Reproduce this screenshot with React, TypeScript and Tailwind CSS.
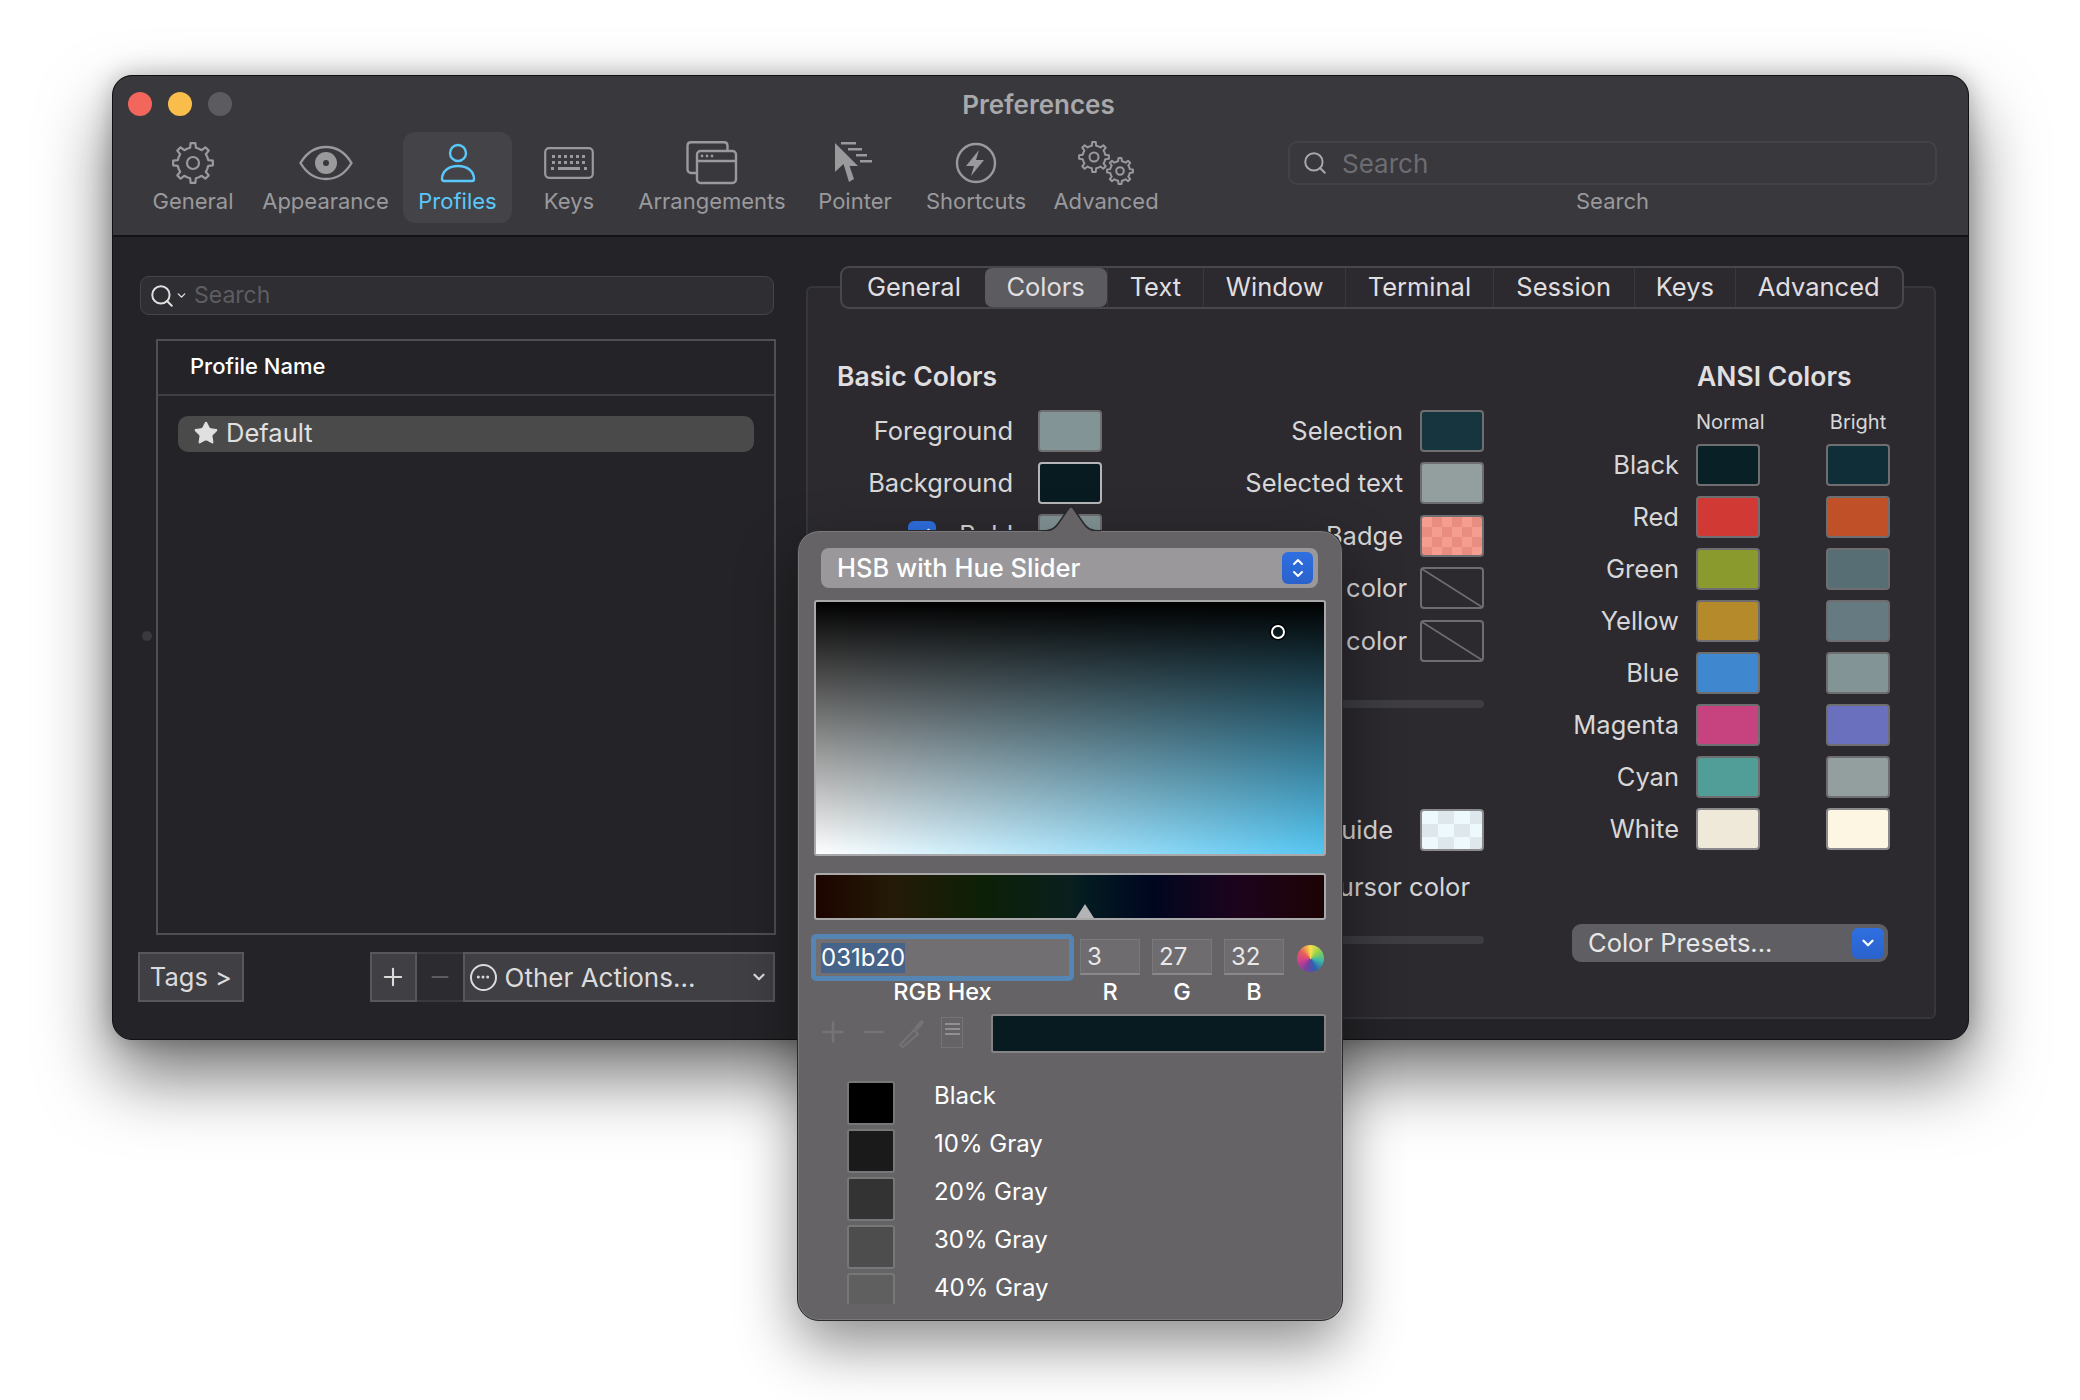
import { ReactNode } from 'react';
import { Check, ChevronDown, ChevronUp, Ellipsis, Minus, Plus, Search, Star } from 'lucide-react';

const TOOL_STROKE = '#9a999c';

// outline of a cog, teeth rounded off by the line join
function gearPath(cx: number, cy: number, outer: number, inner: number, teeth: number) {
  const pts: string[] = [];
  const step = (Math.PI * 2) / teeth;
  for (let i = 0; i < teeth; i++) {
    const a = i * step - Math.PI / 2;
    const offs: [number, number][] = [
      [-0.5, inner],
      [-0.24, inner],
      [-0.15, outer],
      [0.15, outer],
      [0.24, inner],
    ];
    offs.forEach(([o, r]) => {
      const t = a + o * step;
      pts.push(`${(cx + Math.cos(t) * r).toFixed(2)} ${(cy + Math.sin(t) * r).toFixed(2)}`);
    });
  }
  return `M${pts.join('L')}Z`;
}

function GearIcon() {
  return (
    <svg width="44" height="44" viewBox="0 0 44 44" fill="none" stroke={TOOL_STROKE} strokeWidth="2.2" strokeLinejoin="round">
      <path d={gearPath(22, 22, 20, 15.5, 8)} />
      <circle cx="22" cy="22" r="6" />
    </svg>
  );
}

function EyeIcon() {
  return (
    <svg width="54" height="36" viewBox="0 0 54 36" fill="none">
      <path d="M1.5 18C8 7 17 2 27 2s19 5 25.5 16C46 29 37 34 27 34S8 29 1.5 18Z" stroke={TOOL_STROKE} strokeWidth="2.4" />
      <circle cx="27" cy="18" r="11" fill={TOOL_STROKE} />
      <circle cx="27" cy="18" r="3" fill="#39383d" />
    </svg>
  );
}

function PersonIcon() {
  return (
    <svg width="36" height="40" viewBox="0 0 36 40" fill="none" stroke="#5ac8fa" strokeWidth="2.4">
      <circle cx="18" cy="10" r="8" />
      <path d="M2 36c0-8 7-13 16-13s16 5 16 13c0 1.5-1 2-2 2H4c-1 0-2-.5-2-2Z" />
    </svg>
  );
}

function KeyboardIcon() {
  const dots = [9, 15, 21, 27, 33, 39];
  return (
    <svg width="50" height="32" viewBox="0 0 50 32" fill="none">
      <rect x="1.2" y="1.2" width="47.6" height="29.6" rx="4" stroke={TOOL_STROKE} strokeWidth="2.2" />
      {dots.map((x) => (
        <rect key={`a${x}`} x={x - 1} y="8" width="3" height="3" fill={TOOL_STROKE} />
      ))}
      {dots.map((x) => (
        <rect key={`b${x}`} x={x - 1} y="14" width="3" height="3" fill={TOOL_STROKE} />
      ))}
      <rect x="7" y="20" width="3" height="3" fill={TOOL_STROKE} />
      <rect x="14" y="20" width="22" height="3" fill={TOOL_STROKE} />
      <rect x="40" y="20" width="3" height="3" fill={TOOL_STROKE} />
    </svg>
  );
}

function ArrangementsIcon() {
  return (
    <svg width="52" height="44" viewBox="0 0 52 44" fill="none" stroke={TOOL_STROKE} strokeWidth="2.4">
      <path d="M10 32H5a3.5 3.5 0 0 1-3.5-3.5v-24A3.5 3.5 0 0 1 5 1.2h33A3.5 3.5 0 0 1 41.5 4.500V9" />
      <rect x="11" y="10" width="39" height="32" rx="3.500" />
      <path d="M11 20h39" />
      <g fill={TOOL_STROKE} stroke="none">
        <circle cx="16" cy="15" r="1.400" />
        <circle cx="21" cy="15" r="1.400" />
        <circle cx="26" cy="15" r="1.400" />
      </g>
    </svg>
  );
}

function PointerIcon() {
  return (
    <svg width="42" height="42" viewBox="0 0 42 42" fill={TOOL_STROKE}>
      <path d="M1 1 24 24H15.500L20 37l-5 3-5.500-18L1 30Z" />
      <rect x="7" y="0" width="15" height="2.500" />
      <rect x="14" y="6" width="14" height="2.500" />
      <rect x="22" y="12" width="11" height="2.500" />
      <rect x="26" y="18" width="12" height="2.500" />
    </svg>
  );
}

function BoltIcon() {
  return (
    <svg width="42" height="42" viewBox="0 0 42 42" fill="none">
      <circle cx="21" cy="21" r="19" stroke={TOOL_STROKE} strokeWidth="2.400" />
      <path d="M24 8 11 24h8l-3 10 13-16h-8Z" fill={TOOL_STROKE} />
    </svg>
  );
}

function GearsIcon() {
  return (
    <svg width="56" height="44" viewBox="0 0 56 44" fill="none" stroke={TOOL_STROKE} strokeWidth="2" strokeLinejoin="round">
      <path d={gearPath(16, 16, 15, 11.5, 8)} />
      <circle cx="16" cy="16" r="4.500" />
      <path d={gearPath(42, 30, 13, 10, 8)} />
      <circle cx="42" cy="30" r="3.800" />
    </svg>
  );
}

const toolbar: { label: string; icon: ReactNode; w: string; active?: boolean }[] = [
  { label: 'General', icon: <GearIcon />, w: 'w-[120px]' },
  { label: 'Appearance', icon: <EyeIcon />, w: 'w-[145px] mr-[5px]' },
  { label: 'Profiles', icon: <PersonIcon />, w: 'w-[109px]', active: true },
  { label: 'Keys', icon: <KeyboardIcon />, w: 'w-[114px]' },
  { label: 'Arrangements', icon: <ArrangementsIcon />, w: 'w-[172px]' },
  { label: 'Pointer', icon: <PointerIcon />, w: 'w-[114px]' },
  { label: 'Shortcuts', icon: <BoltIcon />, w: 'w-[128px]' },
  { label: 'Advanced', icon: <GearsIcon />, w: 'w-[132px]' },
];

const tabs = [
  { label: 'General', w: 'w-[142px]' },
  { label: 'Colors', w: 'w-[122px]', active: true },
  { label: 'Text', w: 'w-[97px]' },
  { label: 'Window', w: 'w-[142px]' },
  { label: 'Terminal', w: 'w-[148px]' },
  { label: 'Session', w: 'w-[141px]' },
  { label: 'Keys', w: 'w-[102px]' },
  { label: 'Advanced', w: 'w-[166px]' },
];

const ansi = [
  { name: 'Black', normal: 'bg-[#0a2027]', bright: 'bg-[#0f2e38]' },
  { name: 'Red', normal: 'bg-[#d13a34]', bright: 'bg-[#bf5027]' },
  { name: 'Green', normal: 'bg-[#8a9a2c]', bright: 'bg-[#586e75]' },
  { name: 'Yellow', normal: 'bg-[#b58a2b]', bright: 'bg-[#667a82]' },
  { name: 'Blue', normal: 'bg-[#3f87cf]', bright: 'bg-[#839496]' },
  { name: 'Magenta', normal: 'bg-[#c7437f]', bright: 'bg-[#6a70bd]' },
  { name: 'Cyan', normal: 'bg-[#519e98]', bright: 'bg-[#939f9e]' },
  { name: 'White', normal: 'bg-[#efe9d9] border-[#8a898c]', bright: 'bg-[#fdf6e3] border-[#8a898c]' },
];

const grays = [
  { name: 'Black', c: 'bg-[#000000]' },
  { name: '10% Gray', c: 'bg-[#1a1a1a]' },
  { name: '20% Gray', c: 'bg-[#333333]' },
  { name: '30% Gray', c: 'bg-[#4d4d4d]' },
  { name: '40% Gray', c: 'bg-[#5f5f5f]' },
];

function Swatch({ className }: { className: string }) {
  return <div className={`h-[42px] w-[64px] shrink-0 rounded-[4px] border-2 border-[#6e6d70] ${className}`} />;
}

function EmptySwatch() {
  return (
    <svg width="64" height="42" viewBox="0 0 64 42" fill="none" className="shrink-0">
      <rect x="1" y="1" width="62" height="40" rx="3" stroke="#6e6d70" strokeWidth="2" />
      <path d="M2 2 62 40" stroke="#6e6d70" strokeWidth="1.500" />
    </svg>
  );
}

function ColorRow({ label, className, children }: { label: string; className: string; children: ReactNode }) {
  return (
    <div className={`flex items-center justify-end whitespace-nowrap ${className}`}>
      <span className="text-[#d8d7d8]">{label}</span>
      {children}
    </div>
  );
}

function BlueButton({ children, className }: { children: ReactNode; className: string }) {
  return (
    <div className={`flex flex-col items-center justify-center rounded-[6px] bg-gradient-to-b from-[#2f6fe0] to-[#2a62cc] text-white ${className}`}>
      {children}
    </div>
  );
}

function Popover() {
  return (
    <div className="absolute top-[454px] left-[684px] h-[791px] w-[546px]">
      <svg width="60" height="26" viewBox="0 0 60 26" fill="none" className="absolute top-[-24px] left-[244px]">
        <path d="M0 25c10 0 14-2 19-10l9-13c1-1.500 3-1.500 4 0l9 13c5 8 9 10 19 10" fill="#656366" stroke="#29282b" strokeWidth="1.500" />
        <rect x="0" y="25" width="60" height="2" fill="#656366" />
      </svg>
      <div className="h-full rounded-[22px] border border-[#29282b] bg-[#656366] px-[16px] pt-[17px] shadow-[inset_0_0_0_1px_#7a787b,0_24px_60px_rgba(0,0,0,0.45)]">
        <div className="ml-[7px] flex h-[40px] w-[497px] items-center justify-between rounded-[8px] bg-[#9a989b] pr-[5px] pl-[16px] text-[25.500px] font-medium text-white">
          <span>HSB with Hue Slider</span>
          <BlueButton className="h-[32px] w-[31px]">
            <ChevronUp size={16} strokeWidth={3} className="-mb-[2px]" />
            <ChevronDown size={16} strokeWidth={3} className="-mt-[2px]" />
          </BlueButton>
        </div>

        <div className="relative mt-[12px] h-[256px] rounded-[3px] border-2 border-[#a9a8aa] bg-[linear-gradient(to_top,transparent,#000),linear-gradient(to_right,#ffffff,#55c6f2)]">
          <div className="absolute top-[23px] left-[455px] size-[14px] rounded-full border-2 border-white shadow-[0_0_0_1.5px_#000]" />
        </div>

        <div className="relative mt-[17px] h-[47px] rounded-[3px] border-2 border-[#a9a8aa] bg-[linear-gradient(to_right,#1c0400,#241a06_15%,#0c2006_33%,#0a1f1e_50%,#031b20_53%,#000620_66%,#1d041d_83%,#1c0303)]">
          <svg width="18" height="14" viewBox="0 0 18 14" className="absolute bottom-0 left-[260px]">
            <path d="M9 0 18 14H0Z" fill="#b4b3b5" />
          </svg>
        </div>

        <div className="mt-[14px] flex text-[24px] text-[#e8e8e8]">
          <div className="-ml-[3px] h-[47px] w-[263px] rounded-[5px] bg-[#5585b3] p-[5px]">
            <div className="flex h-full items-center bg-[#716f72] pl-[5px]">
              <span className="bg-[#46648a] leading-[30px] text-white">031b20</span>
            </div>
          </div>
          {['3', '27', '32'].map((v, i) => (
            <div
              key={v}
              className={`mt-[5px] flex h-[36px] w-[60px] items-center border border-b-2 border-[#7a787b] border-b-[#8a888b] bg-[#6e6c6f] pl-[6px] ${i === 0 ? 'ml-[6px]' : 'ml-[12px]'}`}
            >
              {v}
            </div>
          ))}
          <div className="mt-[11px] ml-[13px] size-[27px] rounded-full bg-[conic-gradient(#f6e14a,#8fd14f,#3fb6a8,#2f5fb0,#7a3f9e,#d0408a,#e8605a,#f6e14a)]" />
        </div>

        <div className="-mt-[1px] flex h-[24px] items-center text-[23.500px] font-medium text-white">
          <span className="-ml-[3px] w-[263px] text-center">RGB Hex</span>
          <span className="ml-[6px] w-[60px] text-center">R</span>
          <span className="ml-[12px] w-[60px] text-center">G</span>
          <span className="ml-[12px] w-[60px] text-center">B</span>
        </div>

        <div className="mt-[10px] flex h-[39px] items-center">
          <Plus size={32} strokeWidth={2} className="-mt-[3px] ml-[3px] text-[#757376]" />
          <Minus size={30} strokeWidth={2} className="-mt-[3px] ml-[10px] text-[#757376]" />
          <svg width="30" height="32" viewBox="0 0 30 32" fill="none" className="-mt-[3px] ml-[8px]">
            <path d="M3 29l14-15 4 4-15 13Z" stroke="#757376" strokeWidth="2" />
            <path d="M17 12l6-7c2-2 5 1 3 3l-6 7Z" fill="#757376" />
          </svg>
          <div className="-mt-[3px] ml-[14px] flex h-[31px] w-[22px] flex-col items-center justify-start gap-[3px] border border-[#757376] pt-[5px]">
            <div className="h-[2px] w-[15px] bg-[#908f92]" />
            <div className="h-[2px] w-[15px] bg-[#908f92]" />
            <div className="h-[2px] w-[15px] bg-[#908f92]" />
          </div>
          <div className="ml-auto h-[39px] w-[335px] rounded-[3px] border-2 border-[#858386] bg-[#071b21]" />
        </div>

        <div className="mt-[28px] ml-[33px] flex h-[223px] flex-col gap-[4px] overflow-hidden">
          {grays.map((g) => (
            <div key={g.name} className="flex h-[44px] shrink-0 items-start">
              <div className={`h-[44px] w-[48px] rounded-[3px] border-2 border-[#777679] ${g.c}`} />
              <span className="ml-[39px] text-[24px] leading-[29px] text-white">{g.name}</span>
            </div>
          ))}
        </div>
      </div>
    </div>
  );
}

function ProfilesColumn() {
  return (
    <div className="ml-[25px] w-[637px] pt-[39px]">
      <div className="ml-[2px] flex h-[39px] w-[634px] items-center rounded-[9px] border border-[#454449] bg-[#2f2e33] pl-[8px] text-[23px] text-[#5e5d61]">
        <Search size={26} strokeWidth={1.800} className="text-[#e0e0e0]" />
        <ChevronDown size={13} strokeWidth={2.500} className="text-[#e0e0e0]" />
        <span className="ml-[6px]">Search</span>
      </div>

      <div className="mt-[24px] ml-[18px] h-[596px] w-[620px] border-2 border-[#505054]">
        <div className="flex h-[55px] items-center border-b-2 border-[#3f3e43] pb-[2px] pl-[32px] text-[22px] font-medium text-white">
          Profile Name
        </div>
        <div className="mt-[20px] ml-[20px] flex h-[36px] w-[576px] items-center rounded-[10px] bg-[#4a4a4b] pb-[2px] pl-[15px] text-[25.500px] text-[#e0e0e0]">
          <Star size={26} fill="currentColor" strokeWidth={1} />
          <span className="ml-[7px]">Default</span>
        </div>
      </div>

      <div className="mt-[17px] flex h-[50px] text-[25.500px] text-[#dcdbdc]">
        <div className="flex w-[106px] items-center justify-center border-2 border-[#58575c] bg-[#403f44]">Tags &gt;</div>
        <div className="ml-[126px] flex w-[47px] items-center justify-center border-2 border-[#58575c] bg-[#403f44]">
          <Plus size={28} strokeWidth={1.800} />
        </div>
        <div className="flex w-[46px] items-center justify-center border-y-2 border-[#39383c] bg-[#2c2b30] text-[#5e5d61]">
          <Minus size={26} strokeWidth={1.800} />
        </div>
        <div className="flex w-[313px] items-center border-2 border-[#58575c] bg-[#403f44] pr-[5px] pl-[5px] text-[26px]">
          <span className="flex size-[27px] items-center justify-center rounded-full border-2 border-[#dcdbdc]">
            <Ellipsis size={16} strokeWidth={2.500} />
          </span>
          <span className="ml-[8px]">Other Actions...</span>
          <ChevronDown size={18} strokeWidth={3} className="ml-auto" />
        </div>
      </div>
    </div>
  );
}

function ColorsPanel() {
  return (
    <div className="mt-[49px] ml-[31px] h-[733px] w-[1130px] rounded-[6px] border-2 border-[#37363b] bg-[#2c2a2f]">
      <div className="-mt-[22px] ml-[32px] flex h-[43px] w-[1064px] items-center rounded-[9px] border-2 border-[#48474c] bg-[#2c2a2f] px-[1px] text-[25.500px] text-[#e0dfe0]">
        {tabs.map((t, i) => (
          <div
            key={t.label}
            className={`flex h-[39px] items-center justify-center ${t.w} ${t.active ? 'rounded-[7px] bg-[#5c5b60]' : ''} ${
              i > 1 && i < tabs.length ? 'border-l border-[#39383d]' : ''
            }`}
          >
            {t.label}
          </div>
        ))}
      </div>

      <div className="mt-[54px] flex text-[25.500px]">
        <div className="ml-[29px] w-[265px]">
          <h2 className="h-[28px] text-[26.500px] leading-[26px] font-semibold text-[#e0dfe0]">Basic Colors</h2>
          <div className="mt-[19px] flex flex-col gap-[10px]">
            <ColorRow label="Foreground" className="">
              <Swatch className="ml-[25px] bg-[#839496]" />
            </ColorRow>
            <ColorRow label="Background" className="">
              <Swatch className="ml-[25px] border-[#b5b4b6] bg-[#071b21]" />
            </ColorRow>
            <div className="flex items-center justify-end">
              <div className="mr-[23px] flex size-[28px] items-center justify-center rounded-[6px] bg-[#2f6fe0] text-white">
                <Check size={20} strokeWidth={3} />
              </div>
              <span className="text-[#d8d7d8]">Bold</span>
              <Swatch className="ml-[25px] bg-[#839496]" />
            </div>
          </div>
        </div>

        <div className="ml-[1px] w-[381px] pt-[47px]">
          <div className="flex flex-col gap-[10px]">
            <ColorRow label="Selection" className="">
              <Swatch className="ml-[17px] bg-[#17353f]" />
            </ColorRow>
            <ColorRow label="Selected text" className="">
              <Swatch className="ml-[17px] bg-[#939f9e]" />
            </ColorRow>
            <ColorRow label="Badge" className="mt-[1px]">
              <Swatch className="ml-[17px] bg-[repeating-conic-gradient(#e98d80_0_25%,#f59d8f_0_50%)] bg-[size:20px_20px]" />
            </ColorRow>
            <ColorRow label="Tab color" className="">
              <span className="ml-[13px]">
                <EmptySwatch />
              </span>
            </ColorRow>
            <ColorRow label="Underline color" className="mt-[1px]">
              <span className="ml-[13px]">
                <EmptySwatch />
              </span>
            </ColorRow>
          </div>
          <div className="mt-[38px] ml-auto h-[8px] w-[300px] rounded-full bg-[#3e3d42]" />
          <ColorRow label="Cursor guide" className="mt-[101px]">
            <Swatch className="ml-[27px] border-[#8a898c] bg-[repeating-conic-gradient(#dde7ec_0_25%,#eef9fe_0_50%)] bg-[size:32px_26px]" />
          </ColorRow>
          <div className="mt-[21px] flex h-[30px] items-center justify-end pr-[14px] whitespace-nowrap text-[#d8d7d8]">Smart box cursor color</div>
          <div className="mt-[34px] ml-auto h-[8px] w-[300px] rounded-full bg-[#3e3d42]" />
        </div>

        <div className="ml-[16px] w-[390px]">
          <h2 className="ml-[197px] h-[28px] text-[26.500px] leading-[26px] font-semibold text-[#e0dfe0]">ANSI Colors</h2>
          <div className="mt-[18px] flex h-[26px] items-center text-[20px] text-[#d8d7d8]">
            <span className="ml-[196px] w-[64px] text-center">Normal</span>
            <span className="ml-[66px] w-[64px] text-center">Bright</span>
          </div>
          <div className="mt-[9px] flex flex-col gap-[10px]">
            {ansi.map((a) => (
              <div key={a.name} className="flex items-center">
                <span className="w-[179px] text-right text-[#d8d7d8]">{a.name}</span>
                <Swatch className={`ml-[17px] ${a.normal}`} />
                <Swatch className={`ml-[66px] ${a.bright}`} />
              </div>
            ))}
          </div>
          <div className="mt-[74px] ml-[72px] flex h-[38px] w-[316px] items-center justify-between rounded-[9px] bg-[#5f5e63] pr-[4px] pl-[16px] text-[#e8e7e8]">
            <span>Color Presets...</span>
            <BlueButton className="h-[31px] w-[32px]">
              <ChevronDown size={18} strokeWidth={3} />
            </BlueButton>
          </div>
        </div>
      </div>
    </div>
  );
}

export default function App() {
  return (
    <div className="min-h-[1400px] bg-white pt-[75px] pl-[112px] [font-family:Inter,'Noto_Sans',sans-serif]">
      <div className="relative flex h-[965px] w-[1857px] flex-col rounded-[20px] border border-[#111] bg-[#242327] shadow-[0_36px_70px_rgba(0,0,0,0.55),0_0_24px_rgba(0,0,0,0.25)]">
        <div className="h-[161px] shrink-0 rounded-t-[20px] border-b-2 border-[#141416] bg-[#39383d]">
          <div className="grid h-[56px] grid-cols-3 items-center">
            <div className="flex gap-[16px] pl-[15px]">
              <div className="size-[24px] rounded-full bg-[#f2665c]" />
              <div className="size-[24px] rounded-full bg-[#f8bd4b]" />
              <div className="size-[24px] rounded-full bg-[#5c5b60]" />
            </div>
            <div className="pr-[4px] text-center text-[26px] font-semibold text-[#a9a8aa]">Preferences</div>
          </div>
          <div className="flex pl-[20px]">
            {toolbar.map((item) => (
              <div
                key={item.label}
                className={`flex h-[91px] flex-col items-center whitespace-nowrap ${item.w} ${item.active ? 'rounded-[12px] bg-[#444348] text-[#5ac8fa]' : 'text-[#9a999c]'}`}
              >
                <div className="flex h-[57px] items-center pt-[4px]">{item.icon}</div>
                <span className="text-[22px] leading-[24px]">{item.label}</span>
              </div>
            ))}
            <div className="ml-[116px] flex w-[649px] flex-col items-center pt-[9px]">
              <div className="flex h-[44px] w-full items-center rounded-[9px] border-2 border-[#434247] pl-[12px] text-[26px] text-[#6d6c70]">
                <Search size={26} strokeWidth={1.800} className="text-[#a9a8aa]" />
                <span className="ml-[14px]">Search</span>
              </div>
              <span className="mt-[4px] text-[22px] leading-[24px] text-[#9a999c]">Search</span>
            </div>
          </div>
        </div>

        <div className="flex min-h-0 flex-1">
          <ProfilesColumn />
          <ColorsPanel />
        </div>

        <div className="absolute top-[555px] left-[29px] size-[10px] rounded-full bg-[#3a393e]" />
        <Popover />
      </div>
    </div>
  );
}
